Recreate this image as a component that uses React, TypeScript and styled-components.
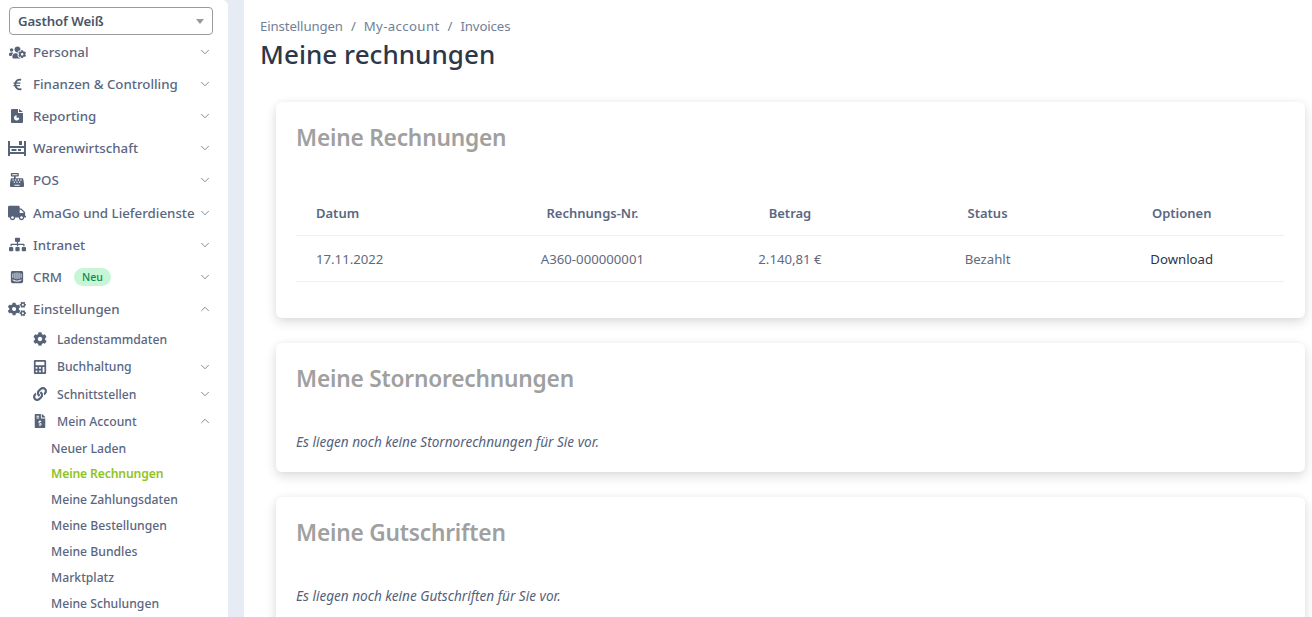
import { ReactNode } from 'react';
import styled, { createGlobalStyle } from 'styled-components';
import { ChevronDown, ChevronUp } from 'lucide-react';
import {
  FaCalculator,
  FaCashRegister,
  FaCog,
  FaCogs,
  FaEuroSign,
  FaFileInvoiceDollar,
  FaIntercom,
  FaLink,
  FaSitemap,
  FaTruck,
  FaUsersCog,
} from 'react-icons/fa';

const GlobalStyle = createGlobalStyle`
  html, body {
    margin: 0;
    height: 100%;
    overflow: hidden;
    background: #e6ebf4;
  }
  * {
    box-sizing: border-box;
  }
  body {
    font-family: 'Noto Sans', 'Open Sans', sans-serif;
  }
`;

const Page = styled.div`
  display: flex;
  height: 617px;
  width: 1312px;
  overflow: hidden;
`;

const Sidebar = styled.aside`
  width: 228px;
  flex: none;
  background: #fff;
  border-top-right-radius: 6px;
  padding: 7px 0 0 9px;
  overflow: hidden;
`;

const StoreSelect = styled.div`
  width: 204px;
  height: 28px;
  border: 1px solid #9a9a9a;
  border-radius: 4px;
  display: flex;
  align-items: center;
  justify-content: space-between;
  padding: 0 8px;
  font-size: 13.2px;
  font-weight: 600;
  color: #4a5568;
  letter-spacing: -0.1px;
  margin-bottom: 1px;
`;

const Caret = styled.span`
  width: 0;
  height: 0;
  border-left: 4px solid transparent;
  border-right: 4px solid transparent;
  border-top: 5px solid #999;
`;

const Row = styled.div<{ $level: number; $active?: boolean; $nudge?: number }>`
  display: flex;
  align-items: center;
  height: ${(p) => (p.$level === 0 ? 32.1 : p.$level === 1 ? 27.3 : 26)}px;
  margin: ${(p) => p.$nudge ?? 0}px 0 0 -1px;
  padding-left: ${(p) => (p.$level === 0 ? 0 : p.$level === 1 ? 25 : 43)}px;
  width: 205px;
  color: ${(p) => (p.$active ? '#8fc31f' : '#5a677f')};
  font-size: ${(p) => (p.$level === 0 ? 13.3 : 12.2)}px;
  font-weight: ${(p) => (p.$active ? 600 : 500)};
  letter-spacing: ${(p) => (p.$active ? -0.15 : 0)}px;
  white-space: nowrap;
`;

const IconBox = styled.span<{ $level: number }>`
  width: ${(p) => (p.$level === 0 ? 25 : 24)}px;
  flex: none;
  display: flex;
  justify-content: ${(p) => (p.$level === 0 ? 'center' : 'flex-start')};
  padding-right: ${(p) => (p.$level === 0 ? 7 : 0)}px;
  color: #566379;
  svg {
    display: block;
  }
`;

const Label = styled.span`
  flex: 1;
  display: flex;
  align-items: center;
  gap: 12px;
`;

const Badge = styled.span`
  height: 18px;
  padding: 0 8px;
  border-radius: 9px;
  background: #c6f6d5;
  color: #0f8a52;
  font-size: 10.5px;
  font-weight: 500;
  display: inline-flex;
  align-items: center;
`;

const Chevron = styled.span`
  width: 16px;
  flex: none;
  color: #5a677f;
  display: flex;
  justify-content: center;
`;

const Main = styled.main`
  margin-left: 16px;
  flex: 1;
  background: #fff;
  padding: 17px 7px 0 16px;
`;

const Breadcrumb = styled.nav`
  display: flex;
  gap: 8px;
  font-size: 13.2px;
  line-height: 18px;
  color: #718096;
`;

const Crumb = styled.span<{ $wide?: boolean }>`
  letter-spacing: ${(p) => (p.$wide ? 0.38 : -0.1)}px;
`;

const PageTitle = styled.h1`
  margin: 1px 0 0;
  font-size: 26px;
  line-height: 36px;
  font-weight: 500;
  color: #2d3748;
  letter-spacing: 0.05px;
`;

const Cards = styled.div`
  display: flex;
  flex-direction: column;
  gap: 25px;
  margin: 30px 0 0 16px;
`;

const Card = styled.section`
  background: #fff;
  border-radius: 6px;
  padding: 20px 21px 0 20px;
  box-shadow: 0 4px 12px rgba(0, 0, 0, 0.14), 0 0 6px rgba(0, 0, 0, 0.03);
`;

const CardTitle = styled.h2`
  margin: 0;
  font-size: 22.7px;
  line-height: 31px;
  font-weight: 600;
  color: #a0a0a0;
  letter-spacing: -0.2px;
`;

const Table = styled.table`
  width: 100%;
  table-layout: fixed;
  border-collapse: collapse;
  margin: 38px 0 36px;
`;

const Th = styled.th<{ $first?: boolean; $last?: boolean }>`
  height: 44px;
  padding: 0 ${(p) => (p.$last ? 7 : 0)}px 0 ${(p) => (p.$first ? 20 : 0)}px;
  text-align: ${(p) => (p.$first ? 'left' : 'center')};
  font-size: 13px;
  font-weight: 600;
  color: #5a677f;
  border-bottom: 1px solid #edf0f5;
`;

const Td = styled.td<{ $first?: boolean; $last?: boolean }>`
  height: 46px;
  padding: 2px ${(p) => (p.$last ? 7 : 0)}px 0 ${(p) => (p.$first ? 20 : 0)}px;
  text-align: ${(p) => (p.$first ? 'left' : 'center')};
  font-size: 13.2px;
  color: ${(p) => (p.$last ? '#2d3748' : '#5f6b80')};
  border-bottom: 1px solid #edf0f5;
`;

const EmptyNote = styled.p`
  margin: 39px 0 21px;
  font-size: 13.6px;
  line-height: 18px;
  font-style: italic;
  color: #566179;
`;

const ReportIcon = () => (
  <svg width="12" height="14" viewBox="0 0 12 14" fill="currentColor">
    <path d="M1 0h6v4h5v9a1 1 0 0 1-1 1H1a1 1 0 0 1-1-1V1a1 1 0 0 1 1-1zM8 0l4 3H8z" />
    <path d="M5.600 6.200a2.600 2.600 0 1 0 2.600 2.600H5.600z" fill="#fff" />
  </svg>
);

const StockIcon = () => (
  <svg width="18" height="15" viewBox="0 0 18 15" fill="currentColor">
    <path d="M0 0h2v5h14V0h2v15h-2v-2H2v2H0zM2 7v4h14V7z" />
    <path d="M11 0h3v4h-3zM3.500 8h5v2h-5zM10 8h3v2h-3z" />
  </svg>
);

interface MenuItem {
  label: string;
  level: number;
  icon?: ReactNode;
  open?: boolean;
  chevron?: boolean;
  badge?: string;
  active?: boolean;
  nudge?: number;
}

const menu: MenuItem[] = [
  { label: 'Personal', level: 0, icon: <FaUsersCog size={17} />, chevron: true },
  { label: 'Finanzen & Controlling', level: 0, icon: <FaEuroSign size={13} />, chevron: true },
  { label: 'Reporting', level: 0, icon: <ReportIcon />, chevron: true },
  { label: 'Warenwirtschaft', level: 0, icon: <StockIcon />, chevron: true },
  { label: 'POS', level: 0, icon: <FaCashRegister size={14} />, chevron: true },
  { label: 'AmaGo und Lieferdienste', level: 0, icon: <FaTruck size={18} />, chevron: true },
  { label: 'Intranet', level: 0, icon: <FaSitemap size={17} />, chevron: true },
  { label: 'CRM', level: 0, icon: <FaIntercom size={14} />, chevron: true, badge: 'Neu' },
  { label: 'Einstellungen', level: 0, icon: <FaCogs size={18} />, chevron: true, open: true },
  { label: 'Ladenstammdaten', level: 1, icon: <FaCog size={14} />, nudge: 1 },
  { label: 'Buchhaltung', level: 1, icon: <FaCalculator size={14} />, chevron: true },
  { label: 'Schnittstellen', level: 1, icon: <FaLink size={14} />, chevron: true },
  { label: 'Mein Account', level: 1, icon: <FaFileInvoiceDollar size={14} />, chevron: true, open: true },
  { label: 'Neuer Laden', level: 2 },
  { label: 'Meine Rechnungen', level: 2, active: true, nudge: -1 },
  { label: 'Meine Zahlungsdaten', level: 2 },
  { label: 'Meine Bestellungen', level: 2 },
  { label: 'Meine Bundles', level: 2 },
  { label: 'Marktplatz', level: 2 },
  { label: 'Meine Schulungen', level: 2 },
];

const App = () => {
  return (
    <Page>
      <GlobalStyle />
      <Sidebar>
        <StoreSelect>
          Gasthof Weiß
          <Caret />
        </StoreSelect>
        {menu.map((item) => (
          <Row key={item.label} $level={item.level} $active={item.active} $nudge={item.nudge}>
            {item.icon && <IconBox $level={item.level}>{item.icon}</IconBox>}
            <Label>
              {item.label}
              {item.badge && <Badge>{item.badge}</Badge>}
            </Label>
            {item.chevron && (
              <Chevron>
                {item.open ? (
                  <ChevronUp size={14} strokeWidth={1.3} />
                ) : (
                  <ChevronDown size={14} strokeWidth={1.3} />
                )}
              </Chevron>
            )}
          </Row>
        ))}
      </Sidebar>
      <Main>
        <Breadcrumb>
          <Crumb>Einstellungen</Crumb>
          <Crumb>/</Crumb>
          <Crumb $wide>My-account</Crumb>
          <Crumb>/</Crumb>
          <Crumb>Invoices</Crumb>
        </Breadcrumb>
        <PageTitle>Meine rechnungen</PageTitle>
        <Cards>
          <Card>
            <CardTitle>Meine Rechnungen</CardTitle>
            <Table>
              <thead>
                <tr>
                  <Th $first>Datum</Th>
                  <Th>Rechnungs-Nr.</Th>
                  <Th>Betrag</Th>
                  <Th>Status</Th>
                  <Th $last>Optionen</Th>
                </tr>
              </thead>
              <tbody>
                <tr>
                  <Td $first>17.11.2022</Td>
                  <Td>A360-000000001</Td>
                  <Td>2.140,81 €</Td>
                  <Td>Bezahlt</Td>
                  <Td $last>Download</Td>
                </tr>
              </tbody>
            </Table>
          </Card>
          <Card>
            <CardTitle>Meine Stornorechnungen</CardTitle>
            <EmptyNote>Es liegen noch keine Stornorechnungen für Sie vor.</EmptyNote>
          </Card>
          <Card>
            <CardTitle>Meine Gutschriften</CardTitle>
            <EmptyNote>Es liegen noch keine Gutschriften für Sie vor.</EmptyNote>
          </Card>
        </Cards>
      </Main>
    </Page>
  );
};

export default App;
